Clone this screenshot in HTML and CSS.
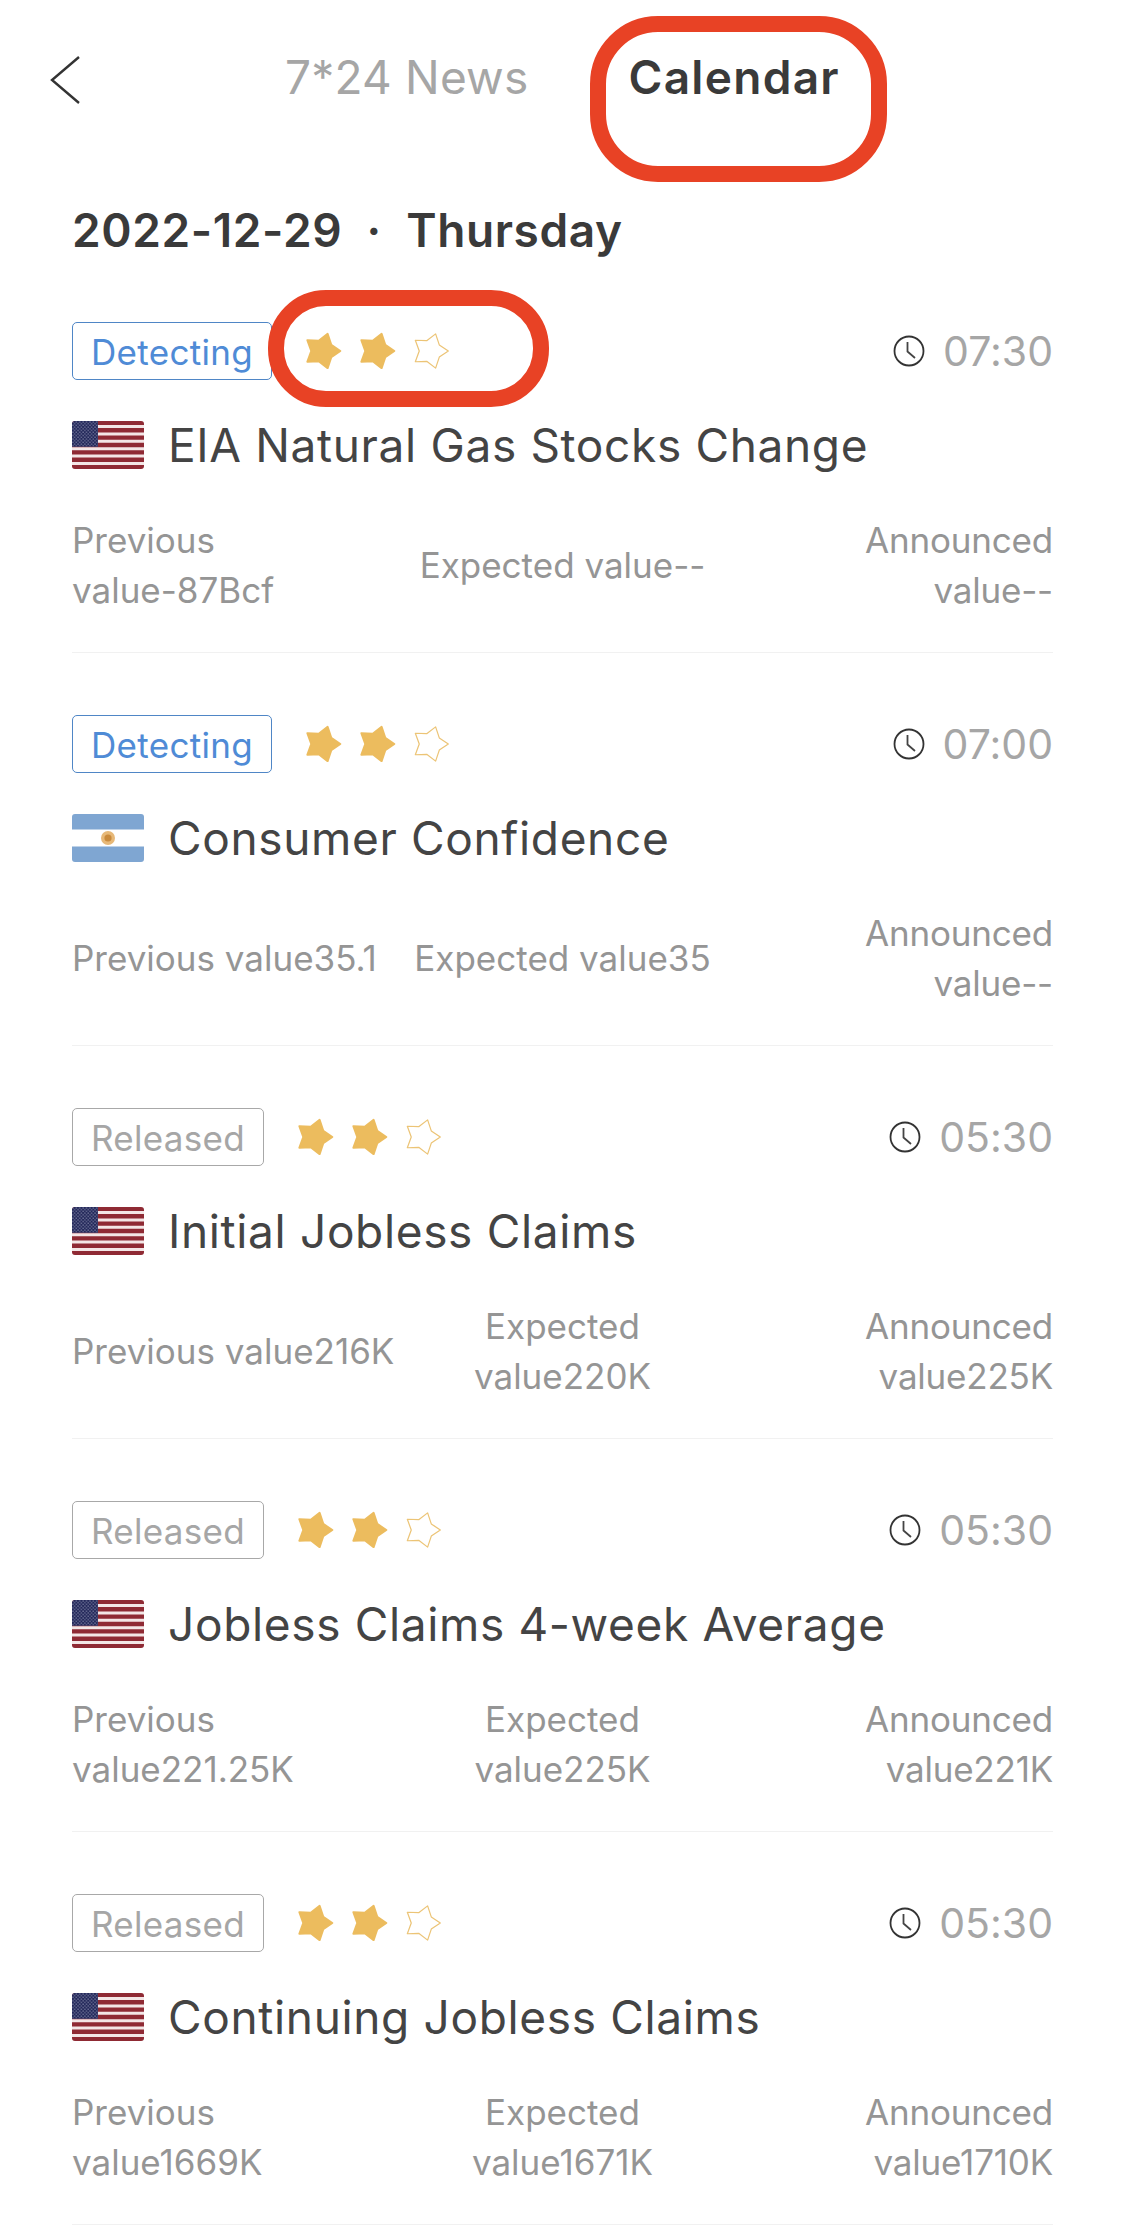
FILE: index.html
```html
<!DOCTYPE html>
<html lang="en">
<head>
  <meta charset="UTF-8" />
  <title>Calendar</title>
  <link rel="stylesheet" href="styles.css">
</head>
<body>
  <svg class="defs" aria-hidden="true">
    <defs>
      <pattern id="dots" width="3.4" height="3.4" patternUnits="userSpaceOnUse">
        <circle cx="0.9" cy="0.9" r="0.55" fill="#d5d9ea" />
        <circle cx="2.6" cy="2.6" r="0.55" fill="#d5d9ea" />
      </pattern>
      <clipPath id="flagClip"><rect width="72" height="48" rx="3" /></clipPath>
    </defs>
    <symbol id="flagUs" viewBox="0 0 72 48">
      <g clip-path="url(#flagClip)">
        <rect width="72" height="48" fill="#f3e6e6" />
        <path d="M0 1.85H72M0 9.25H72M0 16.6H72M0 24H72M0 31.4H72M0 38.75H72M0 46.15H72" stroke="#8f2a34" stroke-width="4.4" />
        <rect width="26" height="25.8" fill="#23285a" />
        <rect width="26" height="25.8" fill="url(#dots)" />
      </g>
    </symbol>
    <symbol id="flagAr" viewBox="0 0 72 48">
      <g clip-path="url(#flagClip)">
        <rect width="72" height="48" fill="#fff" />
        <rect width="72" height="15.5" fill="#7fa6d2" />
        <rect y="32.5" width="72" height="15.5" fill="#7fa6d2" />
        <circle cx="36" cy="24" r="7" fill="#e7b877" />
        <circle cx="36" cy="24" r="3.6" fill="#c98a3c" />
      </g>
    </symbol>
    <symbol id="starFull" viewBox="0 0 36 36">
      <path d="M33 18L25.6 23L22.6 32L15.3 26.4L6 26.8L9.2 18L6 9.2L15.3 9.6L22.6 4L25.6 13Z" fill="#ecbc5e" stroke="#ecbc5e" stroke-width="1.6" stroke-linejoin="round" />
    </symbol>
    <symbol id="starEmpty" viewBox="0 0 36 36">
      <path d="M33 18L25.6 23L22.6 32L15.3 26.4L6 26.8L9.2 18L6 9.2L15.3 9.6L22.6 4L25.6 13Z" fill="none" stroke="#ecc476" stroke-width="1" stroke-linejoin="round" />
    </symbol>
    <symbol id="clock" viewBox="0 0 32 32">
      <circle cx="16" cy="16" r="14.5" fill="none" stroke="#333" stroke-width="1.8" />
      <path d="M14.5 7V16.5L22 23" fill="none" stroke="#444" stroke-width="1.8" />
    </symbol>
  </svg>

  <div class="page">
    <div class="nav">
      <svg class="back" viewBox="0 0 30 48"><path d="M29 1L2 24L29 47" fill="none" stroke="#333" stroke-width="2.4" /></svg>
      <span class="tab">7*24 News</span>
      <span class="tab active">Calendar</span>
    </div>
    <div class="ring ring-tab"></div>

    <div class="date">2022-12-29 &nbsp;·&nbsp; Thursday</div>

    <div class="item">
      <div class="item-top">
        <span class="tag detecting">Detecting</span>
        <span class="stars">
          <svg><use href="#starFull" /></svg>
          <svg><use href="#starFull" /></svg>
          <svg><use href="#starEmpty" /></svg>
        </span>
        <span class="time"><svg><use href="#clock" /></svg>07:30</span>
      </div>
      <div class="title"><svg><use href="#flagUs" /></svg>EIA Natural Gas Stocks Change</div>
      <div class="values">
        <div>Previous<br>value-87Bcf</div>
        <div class="mid">Expected value--</div>
        <div class="end">Announced<br>value--</div>
      </div>
    </div>
    <div class="ring ring-stars"></div>

    <div class="item">
      <div class="item-top">
        <span class="tag detecting">Detecting</span>
        <span class="stars">
          <svg><use href="#starFull" /></svg>
          <svg><use href="#starFull" /></svg>
          <svg><use href="#starEmpty" /></svg>
        </span>
        <span class="time"><svg><use href="#clock" /></svg>07:00</span>
      </div>
      <div class="title"><svg><use href="#flagAr" /></svg>Consumer Confidence</div>
      <div class="values">
        <div>Previous value35.1</div>
        <div class="mid">Expected value35</div>
        <div class="end">Announced<br>value--</div>
      </div>
    </div>

    <div class="item">
      <div class="item-top">
        <span class="tag">Released</span>
        <span class="stars">
          <svg><use href="#starFull" /></svg>
          <svg><use href="#starFull" /></svg>
          <svg><use href="#starEmpty" /></svg>
        </span>
        <span class="time"><svg><use href="#clock" /></svg>05:30</span>
      </div>
      <div class="title"><svg><use href="#flagUs" /></svg>Initial Jobless Claims</div>
      <div class="values">
        <div>Previous value216K</div>
        <div class="mid">Expected<br>value220K</div>
        <div class="end">Announced<br>value225K</div>
      </div>
    </div>

    <div class="item">
      <div class="item-top">
        <span class="tag">Released</span>
        <span class="stars">
          <svg><use href="#starFull" /></svg>
          <svg><use href="#starFull" /></svg>
          <svg><use href="#starEmpty" /></svg>
        </span>
        <span class="time"><svg><use href="#clock" /></svg>05:30</span>
      </div>
      <div class="title"><svg><use href="#flagUs" /></svg>Jobless Claims 4-week Average</div>
      <div class="values">
        <div>Previous<br>value221.25K</div>
        <div class="mid">Expected<br>value225K</div>
        <div class="end">Announced<br>value221K</div>
      </div>
    </div>

    <div class="item">
      <div class="item-top">
        <span class="tag">Released</span>
        <span class="stars">
          <svg><use href="#starFull" /></svg>
          <svg><use href="#starFull" /></svg>
          <svg><use href="#starEmpty" /></svg>
        </span>
        <span class="time"><svg><use href="#clock" /></svg>05:30</span>
      </div>
      <div class="title"><svg><use href="#flagUs" /></svg>Continuing Jobless Claims</div>
      <div class="values">
        <div>Previous<br>value1669K</div>
        <div class="mid">Expected<br>value1671K</div>
        <div class="end">Announced<br>value1710K</div>
      </div>
    </div>
  </div>
</body>
</html>
```

FILE: styles.css
```css
* {
  box-sizing: border-box;
}
html, body {
  margin: 0;
  height: 2240px;
  overflow: hidden;
  background: #fff;
}
body {
  font-family: Inter, "Liberation Sans", Arial, sans-serif;
  font-feature-settings: "calt" 0;
  color: #444;
}
.defs {
  position: absolute;
  width: 0;
  height: 0;
}
.page {
  position: relative;
  padding: 0 72px;
}
.nav {
  display: flex;
  align-items: center;
  height: 154px;
  margin-left: -22px;
  margin-bottom: 46px;
}
.back {
  width: 30px;
  height: 48px;
  margin-top: 5px;
  margin-right: 205px;
}
.tab {
  font-size: 46px;
  line-height: 60px;
  letter-spacing: 0.2px;
  color: #a6a6a6;
}
.tab.active {
  margin-left: 100px;
  font-weight: 600;
  letter-spacing: 1.3px;
  color: #3a3a3a;
}
.ring {
  position: absolute;
  border: 16px solid #e84225;
}
.ring-tab {
  left: 590px;
  top: 16px;
  width: 297px;
  height: 166px;
  border-radius: 68px;
}
.ring-stars {
  left: 268px;
  top: 290px;
  width: 281px;
  height: 117px;
  border-radius: 58px;
}
.date {
  font-size: 46px;
  line-height: 60px;
  font-weight: 600;
  letter-spacing: 0.6px;
  color: #3a3a3a;
  height: 60px;
}
.item {
  padding: 62px 0 37px;
  border-bottom: 1px solid #f1f1f1;
}
.item-top {
  display: flex;
  align-items: center;
  height: 58px;
}
.tag {
  height: 58px;
  padding: 0 18px;
  border: 1.5px solid #a8a8a8;
  border-radius: 5px;
  font-size: 35px;
  line-height: 58px;
  letter-spacing: 0.3px;
  color: #a6a6a6;
}
.tag.detecting {
  border-color: #4f86c6;
  color: #4f8bd6;
}
.stars {
  display: flex;
  gap: 10px;
  margin-left: 28px;
}
.stars svg {
  width: 44px;
  height: 44px;
}
.time {
  display: flex;
  align-items: center;
  margin-left: auto;
  font-size: 41px;
  color: #a6a6a6;
}
.time svg {
  width: 32px;
  height: 32px;
  margin-right: 18px;
}
.title {
  display: flex;
  align-items: center;
  height: 60px;
  margin-top: 35px;
  font-size: 46px;
  letter-spacing: 0.65px;
}
.title svg {
  width: 72px;
  height: 48px;
  margin-right: 24px;
}
.values {
  display: grid;
  grid-template-columns: 1fr auto 1fr;
  align-items: center;
  height: 100px;
  margin-top: 40px;
  font-size: 35px;
  line-height: 50px;
  color: #959595;
}
.mid {
  text-align: center;
}
.end {
  text-align: right;
  letter-spacing: -0.2px;
}
```
